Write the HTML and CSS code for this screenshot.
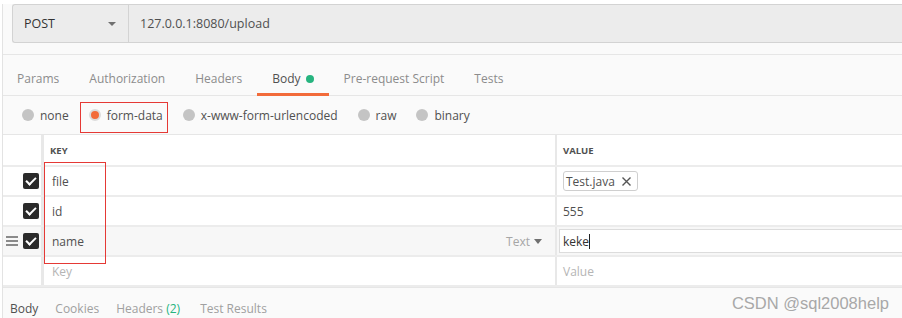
FILE: index.html
```html
<!DOCTYPE html>
<html lang="en">
<head>
    <meta charset="UTF-8">
    <title>Postman - upload</title>
    <link rel="stylesheet" href="styles.css">
</head>
<body>
    <div class="app">
        <div class="url-bar">
            <div class="method">
                <span>POST</span>
                <span class="caret"></span>
            </div>
            <div class="url">127.0.0.1:8080/upload</div>
        </div>

        <div class="tabs">
            <div class="tab">Params</div>
            <div class="tab">Authorization</div>
            <div class="tab">Headers</div>
            <div class="tab active">Body <span class="dot"></span></div>
            <div class="tab">Pre-request Script</div>
            <div class="tab">Tests</div>
        </div>

        <div class="body-types">
            <label class="radio"><span class="circle"></span>none</label>
            <label class="radio checked"><span class="circle"></span>form-data</label>
            <label class="radio"><span class="circle"></span>x-www-form-urlencoded</label>
            <label class="radio"><span class="circle"></span>raw</label>
            <label class="radio"><span class="circle"></span>binary</label>
        </div>

        <div class="table">
            <div class="row head">
                <div class="cell check"></div>
                <div class="cell key">KEY</div>
                <div class="cell value">VALUE</div>
            </div>
            <div class="row">
                <div class="cell check"><span class="box"></span></div>
                <div class="cell key">file</div>
                <div class="cell value">
                    <span class="chip">Test.java
                        <svg width="11" height="11" viewBox="0 0 11 11"><path d="M1.5 1.5 L9.5 9.5 M9.5 1.5 L1.5 9.5" stroke="#555" stroke-width="1.4" fill="none"/></svg>
                    </span>
                </div>
            </div>
            <div class="row">
                <div class="cell check"><span class="box"></span></div>
                <div class="cell key">id</div>
                <div class="cell value">555</div>
            </div>
            <div class="row hover">
                <div class="cell check">
                    <span class="drag"><i></i><i></i><i></i></span>
                    <span class="box"></span>
                </div>
                <div class="cell key">
                    <span>name</span>
                    <span class="type">Text <span class="tri"></span></span>
                </div>
                <div class="cell value">
                    <div class="input">keke<span class="cursor"></span></div>
                </div>
            </div>
            <div class="row">
                <div class="cell check"></div>
                <div class="cell key placeholder">Key</div>
                <div class="cell value placeholder">Value</div>
            </div>
        </div>

        <div class="response-tabs">
            <span class="rtab active">Body</span>
            <span class="rtab">Cookies</span>
            <span class="rtab">Headers <span class="count">(2)</span></span>
            <span class="rtab last">Test Results</span>
        </div>

        <!-- annotations drawn over the screenshot -->
        <div class="mark mark-radio"></div>
        <div class="mark mark-keys"></div>
        <div class="watermark">CSDN @sql2008help</div>
    </div>
</body>
</html>
```

FILE: styles.css
```css
body {
    margin: 0;
    padding: 0;
    width: 902px;
    height: 318px;
    overflow: hidden;
    background: #fff;
    font-family: "Open Sans", Arial, sans-serif;
    font-size: 12px;
    color: #505050;
}

.app {
    position: relative;
    margin-left: 2px;
    height: 318px;
    background: #fafafa;
    border-left: 1px solid #e3e3e3;
}

.url-bar {
    display: flex;
    height: 37px;
    margin: 4px 0 0 9px;
    background: #ececec;
    border: 1px solid #d3d3d3;
    border-right: none;
    border-radius: 3px 0 0 3px;
}

.method {
    width: 92px;
    padding: 0 12px 0 11px;
    display: flex;
    align-items: center;
    justify-content: space-between;
    border-right: 1px solid #d3d3d3;
    font-size: 12.5px;
    color: #333;
}

.caret {
    width: 0;
    height: 0;
    border-left: 4px solid transparent;
    border-right: 4px solid transparent;
    border-top: 4px solid #707070;
}

.url {
    display: flex;
    align-items: center;
    padding-left: 11px;
    font-size: 12.5px;
    color: #505050;
}

.tabs {
    display: flex;
    height: 40px;
    margin-top: 11px;
    border-top: 1px solid #e6e6e6;
    border-bottom: 1px solid #e6e6e6;
}

.tab {
    display: flex;
    align-items: center;
    padding: 9px 15px 0 14px;
    color: #8c8c8c;
    border-bottom: 3px solid transparent;
    margin-bottom: -1px;
}

.tab + .tab {
    padding-left: 15px;
}

.tab.active {
    color: #505050;
    border-bottom-color: #f26b3a;
}

.dot {
    width: 8px;
    height: 8px;
    margin-left: 5px;
    border-radius: 50%;
    background: #26b47f;
}

.body-types {
    display: flex;
    align-items: center;
    gap: 20px;
    height: 38px;
    padding-left: 19px;
    border-bottom: 1px solid #e6e6e6;
}

.radio {
    display: flex;
    align-items: center;
    gap: 6px;
    color: #505050;
}

.circle {
    width: 12px;
    height: 12px;
    border-radius: 50%;
    background: #c4c4c4;
    box-sizing: border-box;
}

.radio.checked .circle {
    background: #f26b3a;
    border: 2px solid #dcdcdc;
}

.table {
    background: #fff;
    border-bottom: 1px solid #e6e6e6;
}

.row {
    display: flex;
    height: 28px;
    border-bottom: 2px solid #ececec;
}

.row.head {
    height: 30px;
}

.row.hover {
    background: #f7f7f7;
}

.cell {
    display: flex;
    align-items: center;
}

.check {
    width: 38px;
    justify-content: flex-end;
    padding-right: 2px;
    box-sizing: border-box;
    position: relative;
}

.key {
    flex: 1;
    padding-left: 8px;
    border-left: 3px solid #e8e8e8;
    justify-content: space-between;
}

.value {
    width: 339px;
    padding-left: 6px;
    border-left: 2px solid #e8e8e8;
}

.head .key,
.head .value {
    font-size: 9.5px;
    font-weight: bold;
    color: #505050;
    padding-left: 6px;
}

.box {
    width: 16px;
    height: 16px;
    border-radius: 2px;
    background: #2b2b2b;
    position: relative;
}

.box::after {
    content: "";
    position: absolute;
    left: 5px;
    top: 2px;
    width: 4px;
    height: 8px;
    border: solid #fff;
    border-width: 0 2px 2px 0;
    transform: rotate(45deg);
}

.drag {
    position: absolute;
    left: 3px;
    top: 9px;
    display: flex;
    flex-direction: column;
    gap: 2.5px;
}

.drag i {
    display: block;
    width: 12px;
    height: 1.5px;
    background: #8a8a8a;
}

.type {
    display: flex;
    align-items: center;
    gap: 4px;
    padding-right: 13px;
    color: #a6a6a6;
}

.tri {
    width: 0;
    height: 0;
    border-left: 4px solid transparent;
    border-right: 4px solid transparent;
    border-top: 5px solid #707070;
}

.chip {
    display: flex;
    align-items: center;
    gap: 6px;
    height: 18px;
    padding: 0 5px 0 2px;
    border: 1px solid #cfcfcf;
    border-radius: 3px;
    color: #505050;
}

.input {
    flex: 1;
    height: 22px;
    margin-left: -4px;
    padding-left: 3px;
    display: flex;
    align-items: center;
    background: #fff;
    border: 1px solid #dcdcdc;
    border-right: none;
    color: #333;
}

.cursor {
    width: 1px;
    height: 15px;
    background: #222;
}

.placeholder {
    color: #b5b5b5;
}

.response-tabs {
    display: flex;
    gap: 17px;
    padding: 13px 0 0 7px;
    line-height: 16px;
    color: #a0a0a0;
}

.rtab.active {
    color: #505050;
}

.rtab.last {
    margin-left: 3px;
}

.count {
    color: #26b47f;
}

.mark {
    position: absolute;
    border: 1px solid #e53935;
}

.mark-radio {
    left: 77px;
    top: 98px;
    width: 86px;
    height: 29px;
}

.mark-keys {
    left: 41px;
    top: 158px;
    width: 60px;
    height: 100px;
}

.watermark {
    position: absolute;
    right: 13px;
    bottom: 9px;
    font-family: "Liberation Sans", Arial, sans-serif;
    font-size: 16.5px;
    color: #a8a8a8;
}
```
